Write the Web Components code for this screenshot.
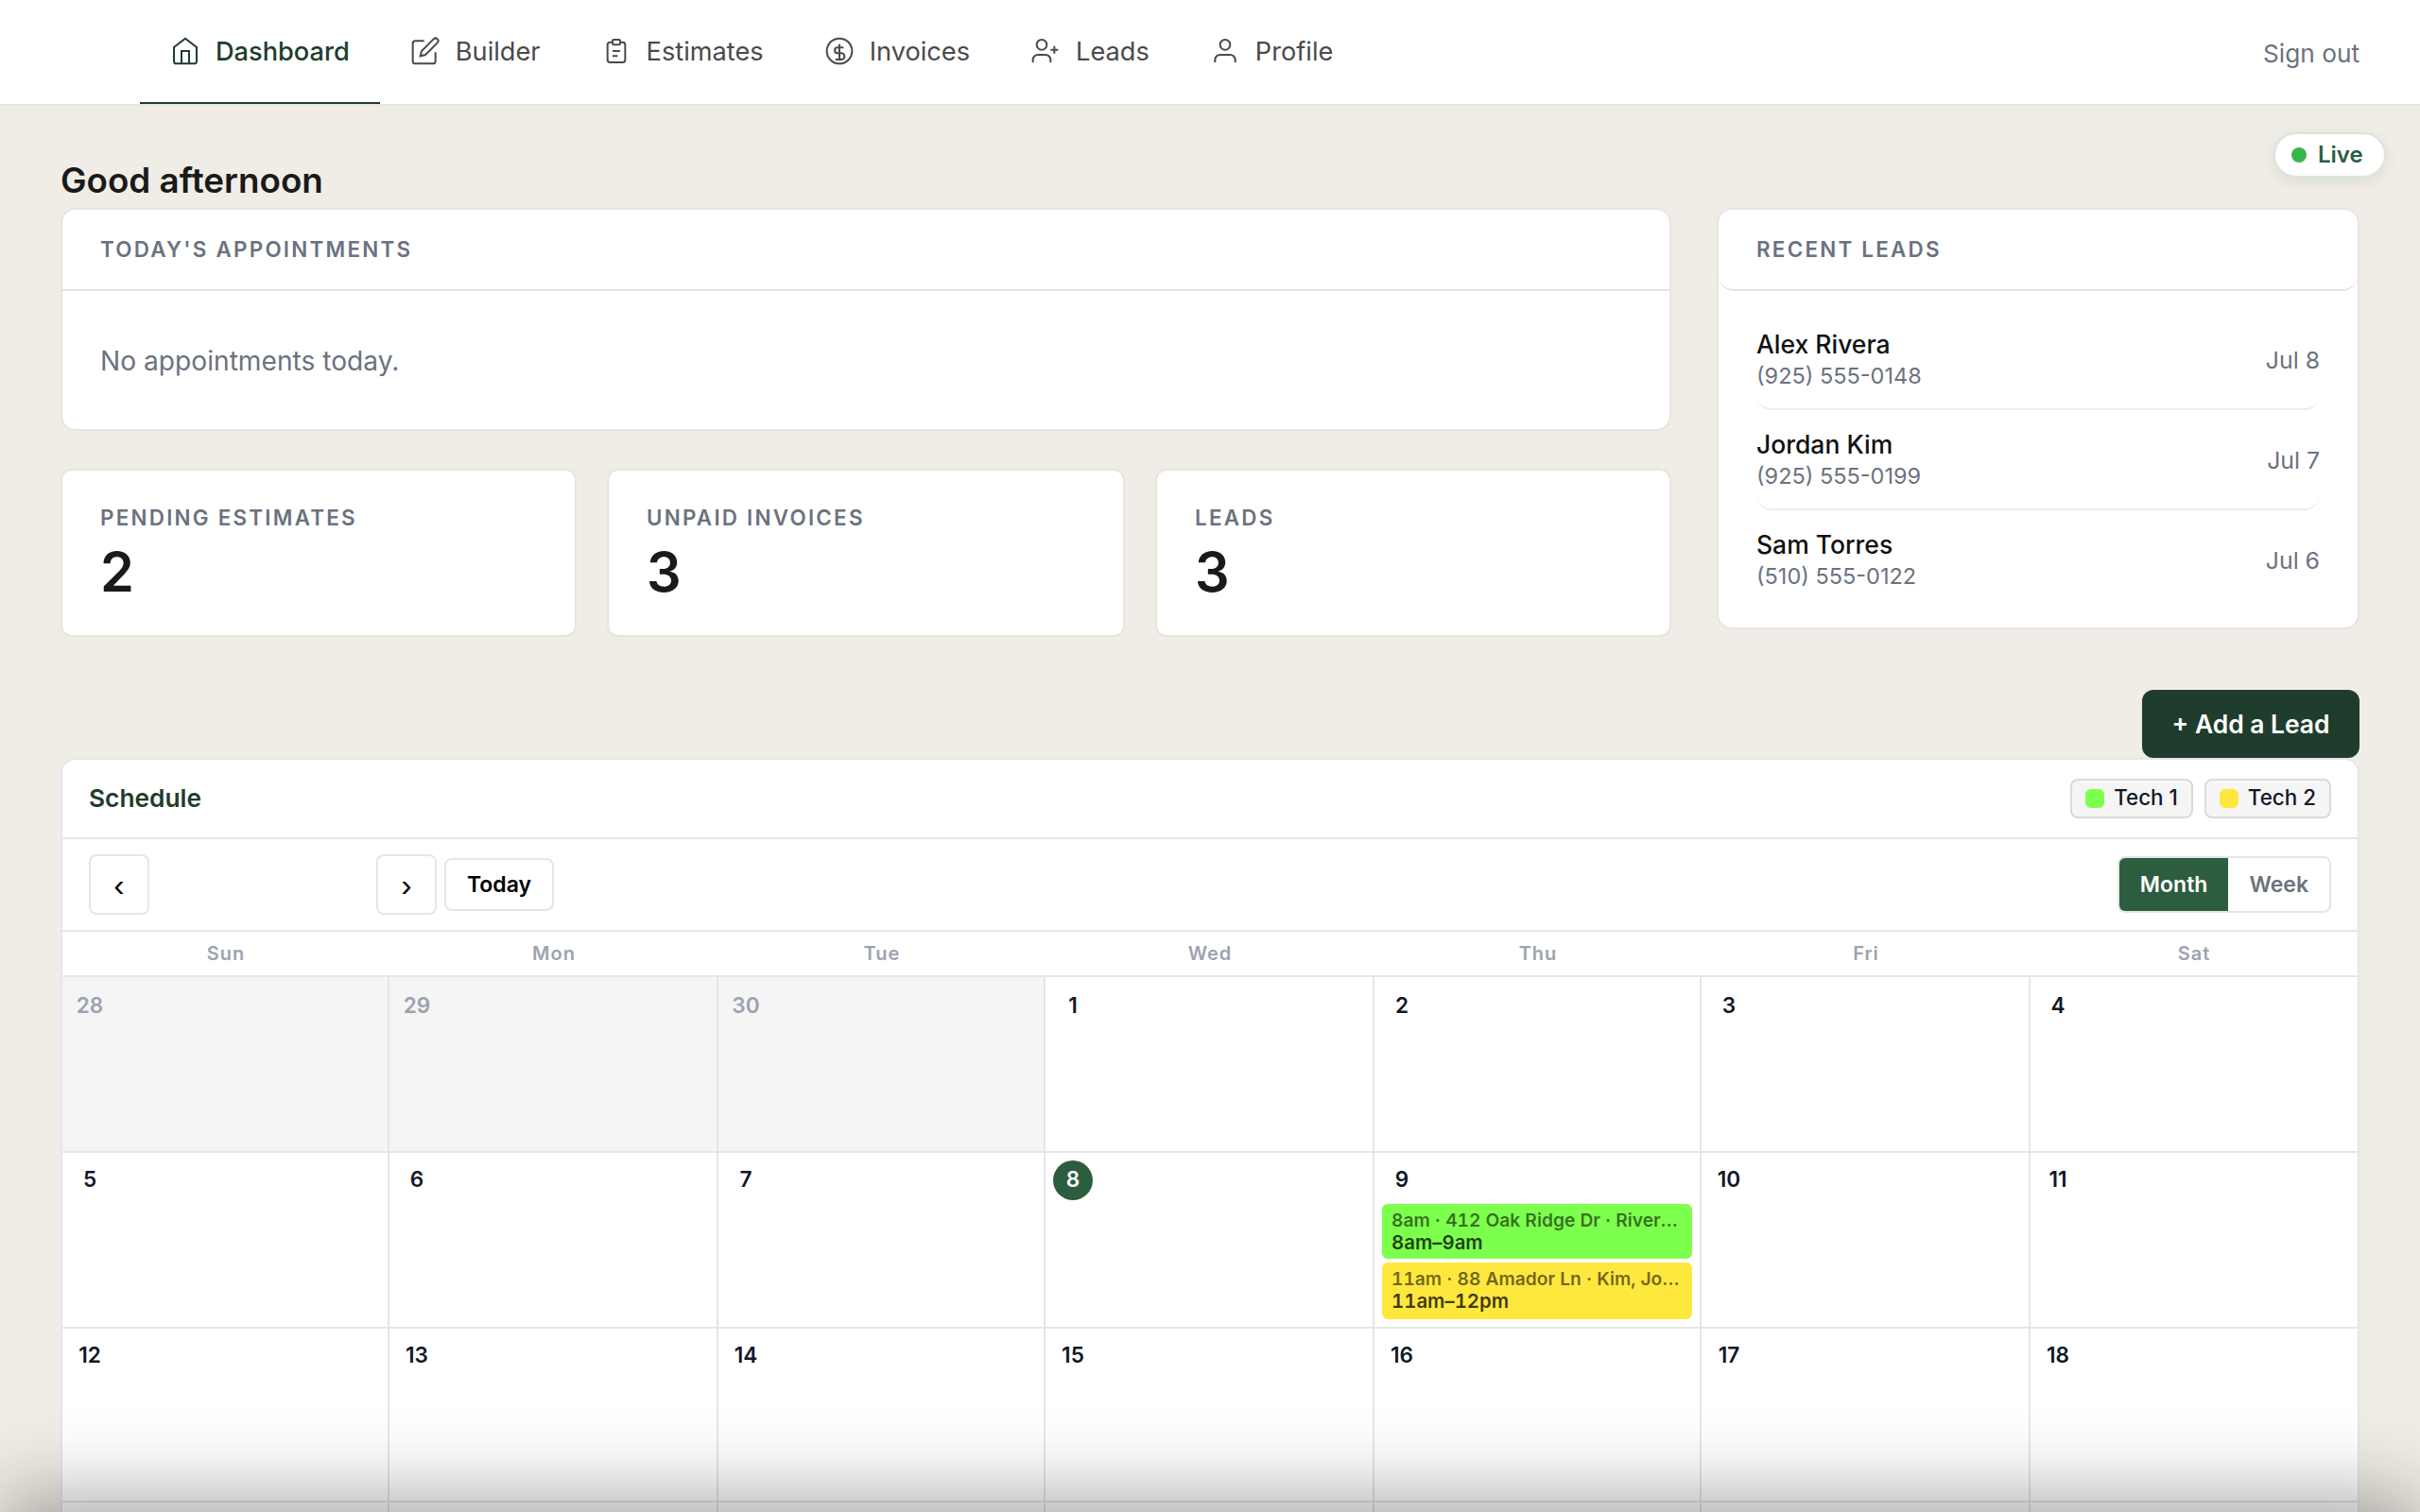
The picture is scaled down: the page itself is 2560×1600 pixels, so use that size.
<!DOCTYPE html>
<html lang="en">
<head>
<meta charset="utf-8">
<title>Dashboard</title>
<style>
  :root {
    --bg: #f0ede6;
    --line: #e8e4de;
    --cal-line: #e5e6eb;
    --ink: #1a1a1a;
    --muted: #6b7280;
    --green-dark: #1f3d2c;
    --green: #2d5d3f;
  }

  * {
    box-sizing: border-box;
  }

  body {
    background: var(--bg);
    color: var(--ink);
    font-family: Inter, "Liberation Sans", sans-serif;
    height: 1600px;
    margin: 0;
    overflow: hidden;
    position: relative;
    width: 2560px;
  }
</style>
</head>
<body>
<dashboard-page></dashboard-page>

<script>
const baseStyles = /* css */`
  *, :host { box-sizing: border-box; }
  :host { display: block; }
`

const icons = {
  home: '<path d="M3 9l9-7 9 7v11a2 2 0 0 1-2 2H5a2 2 0 0 1-2-2z"/><path d="M9 22V12h6v10"/>',
  edit: '<path d="M11 4H4a2 2 0 0 0-2 2v14a2 2 0 0 0 2 2h14a2 2 0 0 0 2-2v-7"/><path d="M18.5 2.5a2.121 2.121 0 0 1 3 3L12 15l-4 1 1-4 9.5-9.5z"/>',
  clipboard: '<path d="M9 5H7a2 2 0 0 0-2 2v12a2 2 0 0 0 2 2h10a2 2 0 0 0 2-2V7a2 2 0 0 0-2-2h-2"/><rect x="9" y="3" width="6" height="4" rx="1"/><path d="M9 12h6M9 16h4"/>',
  dollar: '<circle cx="12" cy="12" r="10"/><path d="M12 6.5v12.2M15.2 9.2h-4.7a2.2 2.2 0 0 0 0 4.4h3a2.55 2.55 0 0 1 0 5.1H8.8"/>',
  userPlus: '<path d="M16 21v-2a4 4 0 0 0-4-4H6a4 4 0 0 0-4 4v2"/><circle cx="9" cy="7" r="4"/><path d="M19 8v6M22 11h-6"/>',
  user: '<path d="M20 21v-2a4 4 0 0 0-4-4H8a4 4 0 0 0-4 4v2"/><circle cx="12" cy="7" r="4"/>'
}

class NavTab extends HTMLElement {
  constructor () {
    super()
    this.attachShadow({ mode: 'open' })
  }

  connectedCallback () {
    this.shadowRoot.innerHTML = /* html */`
    <style>
      ${baseStyles}
      :host {
        align-items: center;
        border-bottom: 2px solid transparent;
        color: #4a4a4a;
        display: flex;
        font-size: 27.2px;
        gap: 16px;
        height: 110px;
        line-height: 32px;
        padding: 0 32px;
        white-space: nowrap;
      }
      :host([active]) {
        border-color: var(--green-dark);
        color: var(--green-dark);
        font-weight: 500;
      }
      svg {
        fill: none;
        height: 32px;
        stroke: currentColor;
        stroke-width: 1.5;
        width: 32px;
      }
      span {
        padding-top: 2px;
      }
    </style>
    <svg viewBox="0 0 24 24">${icons[this.getAttribute('icon')]}</svg>
    <span><slot></slot></span>
  `
  }
}

class AppHeader extends HTMLElement {
  constructor () {
    super()
    this.attachShadow({ mode: 'open' })
  }

  connectedCallback () {
    this.shadowRoot.innerHTML = /* html */`
    <style>
      ${baseStyles}
      :host {
        background: #fff;
        border-bottom: 2px solid var(--line);
        display: flex;
        height: 112px;
        justify-content: space-between;
        padding: 0 64px 0 148px;
      }
      nav {
        display: flex;
      }
      .sign-out {
        color: var(--muted);
        font-size: 26.24px;
        line-height: 113px;
      }
    </style>
    <nav>
      <nav-tab icon="home" active>Dashboard</nav-tab>
      <nav-tab icon="edit">Builder</nav-tab>
      <nav-tab icon="clipboard">Estimates</nav-tab>
      <nav-tab icon="dollar">Invoices</nav-tab>
      <nav-tab icon="userPlus">Leads</nav-tab>
      <nav-tab icon="user">Profile</nav-tab>
    </nav>
    <span class="sign-out">Sign out</span>
  `
  }
}

class LivePill extends HTMLElement {
  constructor () {
    super()
    this.attachShadow({ mode: 'open' })
  }

  connectedCallback () {
    this.shadowRoot.innerHTML = /* html */`
    <style>
      ${baseStyles}
      :host {
        align-items: center;
        background: #fff;
        border: 2px solid #d8e6dd;
        border-radius: 24px;
        box-shadow: 0 4px 16px rgba(0, 0, 0, 0.08);
        color: var(--green);
        display: flex;
        font-size: 24px;
        font-weight: 600;
        gap: 12px;
        height: 48px;
        line-height: 28px;
        padding: 0 0 1px 17px;
        position: absolute;
        right: 36px;
        top: 140px;
        width: 119px;
      }
      i {
        background: #39b54a;
        border-radius: 50%;
        height: 16px;
        width: 16px;
      }
    </style>
    <i></i><slot></slot>
  `
  }
}

class PanelCard extends HTMLElement {
  constructor () {
    super()
    this.attachShadow({ mode: 'open' })
  }

  connectedCallback () {
    this.shadowRoot.innerHTML = /* html */`
    <style>
      ${baseStyles}
      :host {
        background: #fff;
        border: 2px solid var(--line);
        border-radius: 16px;
      }
      header {
        border-bottom: 2px solid var(--line);
        color: var(--muted);
        font-size: 22.4px;
        font-weight: 600;
        height: 86px;
        letter-spacing: 0.1em;
        line-height: 83px;
        padding: 0 40px;
        text-transform: uppercase;
      }
      :host([rounded]) header {
        border-radius: 16px;
      }
      section {
        padding: 20px 40px;
      }
    </style>
    <header>${this.getAttribute('heading')}</header>
    <section><slot></slot></section>
  `
  }
}

class StatCard extends HTMLElement {
  constructor () {
    super()
    this.attachShadow({ mode: 'open' })
  }

  connectedCallback () {
    this.shadowRoot.innerHTML = /* html */`
    <style>
      ${baseStyles}
      :host {
        background: #fff;
        border: 2px solid var(--line);
        border-radius: 12px;
        height: 178px;
        padding: 36px 40px;
      }
      .label {
        color: var(--muted);
        font-size: 22.4px;
        font-weight: 600;
        letter-spacing: 0.1em;
        line-height: 28px;
        text-transform: uppercase;
      }
      .value {
        font-size: 57.6px;
        font-weight: 600;
        line-height: 56px;
        margin-top: 15px;
      }
    </style>
    <div class="label">${this.getAttribute('label')}</div>
    <div class="value"><slot></slot></div>
  `
  }
}

class LeadRow extends HTMLElement {
  constructor () {
    super()
    this.attachShadow({ mode: 'open' })
  }

  connectedCallback () {
    this.shadowRoot.innerHTML = /* html */`
    <style>
      ${baseStyles}
      :host {
        align-items: center;
        border-bottom: 2px solid var(--bg);
        border-radius: 16px;
        color: var(--muted);
        display: flex;
        height: 106px;
        justify-content: space-between;
        padding-top: 2px;
      }
      :host(:last-of-type) {
        border-bottom: 0;
        height: 104px;
      }
      .name {
        color: #111;
        font-size: 26.5px;
        font-weight: 500;
        line-height: 32px;
        padding-bottom: 2px;
      }
      .phone {
        font-size: 23.5px;
        line-height: 32px;
      }
      .date {
        font-size: 24.8px;
      }
    </style>
    <div>
      <div class="name"><slot></slot></div>
      <div class="phone">${this.getAttribute('phone')}</div>
    </div>
    <span class="date">${this.getAttribute('date')}</span>
  `
  }
}

class TechTag extends HTMLElement {
  constructor () {
    super()
    this.attachShadow({ mode: 'open' })
  }

  connectedCallback () {
    this.shadowRoot.innerHTML = /* html */`
    <style>
      ${baseStyles}
      :host {
        align-items: center;
        background: #f5f5f5;
        border: 2px solid #dadada;
        border-radius: 8px;
        color: #111827;
        display: flex;
        font-size: 22.4px;
        font-weight: 500;
        gap: 10px;
        height: 42px;
        line-height: 36px;
        padding: 0 14px;
      }
      i {
        background: ${this.getAttribute('color')};
        border-radius: 6px;
        height: 20px;
        width: 20px;
      }
      span {
        padding-bottom: 2px;
      }
    </style>
    <i></i><span><slot></slot></span>
  `
  }
}

class CalendarEvent extends HTMLElement {
  constructor () {
    super()
    this.attachShadow({ mode: 'open' })
  }

  connectedCallback () {
    this.shadowRoot.innerHTML = /* html */`
    <style>
      ${baseStyles}
      :host {
        background: ${this.getAttribute('color')};
        border-radius: 6px;
        color: rgba(0, 0, 0, 0.75);
        font-size: 20.4px;
        font-variant-numeric: tabular-nums;
        font-weight: 600;
        line-height: 24px;
        padding: 5px 10px 0;
      }
      .title {
        font-size: 19.2px;
        opacity: 0.75;
        overflow: hidden;
        text-overflow: ellipsis;
        white-space: nowrap;
      }
    </style>
    <div class="title"><slot></slot></div>
    <div class="time">${this.getAttribute('time')}</div>
  `
  }
}

class CalendarDay extends HTMLElement {
  constructor () {
    super()
    this.attachShadow({ mode: 'open' })
  }

  connectedCallback () {
    this.shadowRoot.innerHTML = /* html */`
    <style>
      ${baseStyles}
      :host {
        border-bottom: 2px solid var(--cal-line);
        border-right: 2px solid var(--cal-line);
        color: #111827;
        min-width: 0;
        padding: 8px;
      }
      :host(:nth-child(7n)) {
        border-right: 0;
      }
      :host([first-week]) {
        padding-top: 10px;
      }
      :host([outside]) {
        background: #f5f5f5;
        color: #9ca3af;
      }
      .number {
        border-radius: 50%;
        font-size: 22.6px;
        font-weight: 600;
        height: 42px;
        line-height: 40px;
        margin-bottom: 4px;
        text-align: center;
        width: 42px;
      }
      :host([today]) .number {
        background: var(--green);
        color: #fff;
      }
      .events {
        display: grid;
        gap: 4px;
        grid-template-columns: minmax(0, 1fr);
        grid-template-rows: 58px 60px;
      }
    </style>
    ${this.hasAttribute('day') ? `<div class="number">${this.getAttribute('day')}</div>` : ''}
    <div class="events"><slot></slot></div>
  `
  }
}

class ScheduleCalendar extends HTMLElement {
  days = [28, 29, 30, 1, 2, 3, 4, 5, 6, 7, 8, 9, 10, 11, 12, 13, 14, 15, 16, 17, 18]

  events = {
    9: [
      ['8am · 412 Oak Ridge Dr · Rivera, Alex', '8am–9am', '#7dff4d'],
      ['11am · 88 Amador Ln · Kim, Jordan', '11am–12pm', '#ffe83d']
    ]
  }

  constructor () {
    super()
    this.attachShadow({ mode: 'open' })
  }

  connectedCallback () {
    this.shadowRoot.innerHTML = /* html */`
    <style>
      ${baseStyles}
      :host {
        background: #fff;
        border: 2px solid var(--cal-line);
        border-radius: 16px;
        height: 1100px;
        overflow: hidden;
      }
      .title, .toolbar {
        align-items: center;
        border-bottom: 2px solid var(--cal-line);
        display: flex;
        justify-content: space-between;
        padding: 0 28px;
      }
      .title {
        color: var(--green-dark);
        font-size: 26.3px;
        font-weight: 600;
        height: 84px;
        line-height: 30px;
      }
      .toolbar {
        height: 98px;
      }
      .group {
        align-items: center;
        display: flex;
        gap: 12px;
      }
      .nav {
        gap: 8px;
      }
      .range {
        width: 224px;
      }
      button {
        background: #fff;
        border: 2px solid var(--cal-line);
        border-radius: 8px;
        color: #000;
        font: 600 23px/52px Inter, "Liberation Sans", sans-serif;
        height: 56px;
        padding: 0;
        width: 116px;
      }
      button.arrow {
        font: 34px/60px "Liberation Sans", sans-serif;
        height: 64px;
        width: 64px;
      }
      .toggle {
        border: 2px solid var(--cal-line);
        border-radius: 8px;
        color: var(--muted);
        display: flex;
        font-size: 23px;
        font-weight: 600;
        height: 60px;
        line-height: 56px;
        overflow: hidden;
      }
      .toggle span {
        padding: 0 22px;
      }
      .toggle .on {
        background: var(--green);
        color: #fff;
      }
      .weekdays, .grid {
        display: grid;
        grid-template-columns: 346px 348px 346px 348px 346px 348px 346px;
      }
      .weekdays {
        border-bottom: 2px solid var(--cal-line);
        color: #9ca3af;
        font-size: 20px;
        font-weight: 600;
        height: 48px;
        letter-spacing: 1px;
        line-height: 46px;
        text-align: center;
      }
      .grid {
        grid-template-rows: 186px 186px 184px 186px;
      }
    </style>
    <div class="title">
      Schedule
      <div class="group">
        <tech-tag color="#7dff4d">Tech 1</tech-tag>
        <tech-tag color="#ffe83d">Tech 2</tech-tag>
      </div>
    </div>
    <div class="toolbar">
      <div class="group nav">
        <button class="arrow">‹</button>
        <span class="range"></span>
        <button class="arrow">›</button>
        <button>Today</button>
      </div>
      <div class="toggle"><span class="on">Month</span><span>Week</span></div>
    </div>
    <div class="weekdays">
      ${['Sun', 'Mon', 'Tue', 'Wed', 'Thu', 'Fri', 'Sat'].map(name => `<span>${name}</span>`).join('')}
    </div>
    <div class="grid">
      ${this.days.map((day, index) => this.renderDay(day, index)).join('')}
      ${'<calendar-day></calendar-day>'.repeat(7)}
    </div>
  `
  }

  renderDay (day, index) {
    const flags = [
      index < 3 ? 'outside' : '',
      index < 7 ? 'first-week' : '',
      day === 8 ? 'today' : ''
    ].join(' ')
    const events = (this.events[day] || []).map(([title, time, color]) =>
      `<calendar-event time="${time}" color="${color}">${title}</calendar-event>`)
    return `<calendar-day day="${day}" ${flags}>${events.join('')}</calendar-day>`
  }
}

class DashboardPage extends HTMLElement {
  constructor () {
    super()
    this.attachShadow({ mode: 'open' })
  }

  connectedCallback () {
    this.shadowRoot.innerHTML = /* html */`
    <style>
      ${baseStyles}
      main {
        padding: 57px 64px 0;
      }
      h1 {
        font-size: 36.8px;
        font-weight: 600;
        line-height: 44px;
        margin: 0 0 7px;
      }
      .top {
        align-items: start;
        display: grid;
        gap: 48px;
        grid-template-columns: 1fr 680px;
      }
      .today {
        height: 236px;
      }
      .today p {
        color: var(--muted);
        font-size: 28.16px;
        line-height: 34px;
        margin: 37px 0 0;
      }
      .stats {
        display: grid;
        gap: 32px;
        grid-template-columns: 546px 548px 546px;
        margin-top: 40px;
      }
      .actions {
        display: flex;
        justify-content: flex-end;
        margin-top: 56px;
      }
      .add {
        background: var(--green-dark);
        border: 0;
        border-radius: 12px;
        color: #fff;
        font: 600 26.4px/72px Inter, "Liberation Sans", sans-serif;
        height: 72px;
        padding: 0;
        width: 230px;
      }
      /* shadow of the sheet parked below the fold */
      .sheet {
        box-shadow: 0 -16px 80px rgba(0, 0, 0, 0.35);
        height: 400px;
        left: 0;
        position: absolute;
        right: 0;
        top: 1600px;
      }
    </style>
    <app-header></app-header>
    <live-pill>Live</live-pill>
    <main>
      <h1>Good afternoon</h1>
      <div class="top">
        <div>
          <panel-card class="today" heading="Today's appointments"><p>No appointments today.</p></panel-card>
          <div class="stats">
            <stat-card label="Pending estimates">2</stat-card>
            <stat-card label="Unpaid invoices">3</stat-card>
            <stat-card label="Leads">3</stat-card>
          </div>
        </div>
        <panel-card heading="Recent leads" rounded>
          <lead-row phone="(925) 555-0148" date="Jul 8">Alex Rivera</lead-row>
          <lead-row phone="(925) 555-0199" date="Jul 7">Jordan Kim</lead-row>
          <lead-row phone="(510) 555-0122" date="Jul 6">Sam Torres</lead-row>
        </panel-card>
      </div>
      <div class="actions"><button class="add">+ Add a Lead</button></div>
      <schedule-calendar></schedule-calendar>
    </main>
    <div class="sheet"></div>
  `
  }
}

window.customElements.define('nav-tab', NavTab)
window.customElements.define('app-header', AppHeader)
window.customElements.define('live-pill', LivePill)
window.customElements.define('panel-card', PanelCard)
window.customElements.define('stat-card', StatCard)
window.customElements.define('lead-row', LeadRow)
window.customElements.define('tech-tag', TechTag)
window.customElements.define('calendar-event', CalendarEvent)
window.customElements.define('calendar-day', CalendarDay)
window.customElements.define('schedule-calendar', ScheduleCalendar)
window.customElements.define('dashboard-page', DashboardPage)
</script>
</body>
</html>
